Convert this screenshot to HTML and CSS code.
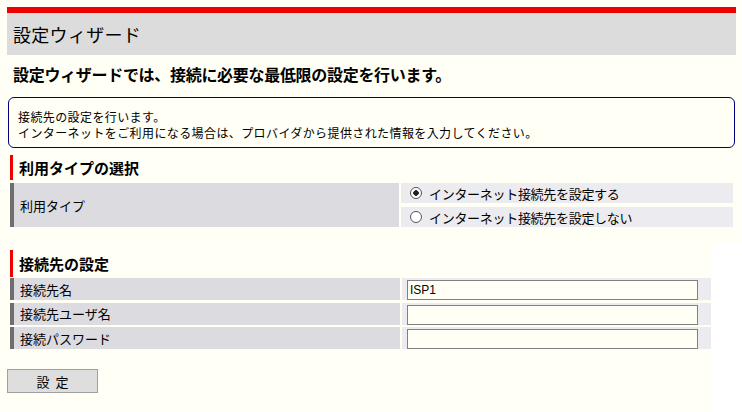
FILE: index.html
```html
<!DOCTYPE html>
<html lang="ja">
<head>
    <meta charset="UTF-8">
    <meta name="viewport" content="width=device-width, initial-scale=1.0">
    <title>設定ウィザード</title>
    <link rel="stylesheet" href="styles.css">
</head>
<body>
    <!-- 上部: タイトルと利用タイプ -->
    <div class="top">
        <div class="titlebar">
            <h1>設定ウィザード</h1>
        </div>
        <p class="lead">設定ウィザードでは、接続に必要な最低限の設定を行います。</p>

        <div class="note">
            <p>接続先の設定を行います。</p>
            <p>インターネットをご利用になる場合は、プロバイダから提供された情報を入力してください。</p>
        </div>

        <h2 class="sec">利用タイプの選択</h2>
        <div class="type-grid">
            <div class="label label-tall">利用タイプ</div>
            <label class="value"><input type="radio" name="type" checked> インターネット接続先を設定する</label>
            <label class="value"><input type="radio" name="type"> インターネット接続先を設定しない</label>
        </div>
    </div>

    <!-- 下部: 接続先の設定 -->
    <div class="bottom">
        <h2 class="sec sec-2">接続先の設定</h2>
        <div class="conn-grid">
            <div class="label">接続先名</div>
            <div class="value"><input type="text" class="field" value="ISP1"></div>
            <div class="label">接続先ユーザ名</div>
            <div class="value"><input type="text" class="field"></div>
            <div class="label">接続パスワード</div>
            <div class="value"><input type="password" class="field"></div>
        </div>
        <button class="submit-btn">設&nbsp;&nbsp;定</button>
    </div>
</body>
</html>
```

FILE: styles.css
```css
/* 全体 */
body {
    margin: 0;
    background-color: #ffffff;
    font-family: "Noto Sans CJK JP", "Liberation Sans", sans-serif;
    color: #000;
}

.top {
    background-color: #fffff5;
    padding: 7px 6px 16px 7px;
}

.bottom {
    background-color: #fffff5;
    width: 704px;
    height: 169px;
    padding-left: 7px;
    padding-top: 7px;
}

/* タイトル */
.titlebar {
    border-top: 6px solid #ee0000;
    background-color: #dcdcdc;
    height: 42px;
    display: flex;
    align-items: center;
    padding-left: 6px;
}
.titlebar h1 {
    margin: 0;
    font-size: 18px;
    font-weight: normal;
    line-height: 1;
    letter-spacing: 0.3px;
}

.lead {
    margin: 8px 0 0 6px;
    font-size: 16px;
    font-weight: bold;
    line-height: 22px;
    letter-spacing: -0.3px;
}

/* 説明ボックス */
.note {
    margin: 12px 1px 0 1px;
    border: 1px solid #000080;
    border-radius: 6px;
    padding: 11px 8px 6px 9px;
    font-size: 12px;
    line-height: 16px;
    letter-spacing: 0.4px;
}
.note p {
    margin: 0;
}

/* 見出し */
.sec {
    margin: 7px 0 0 3px;
    border-left: 3px solid #ee0000;
    padding-left: 6px;
    height: 25px;
    line-height: 25px;
    font-size: 15px;
    font-weight: bold;
}
.sec-2 {
    margin-top: 0;
    height: 27px;
    line-height: 27px;
}

/* 表 */
.label {
    background-color: #dcdce0;
    border-left: 4px solid #6e6e6e;
    padding-left: 6px;
    font-size: 13px;
    display: flex;
    align-items: center;
}
.value {
    background-color: #ececf0;
    display: flex;
    align-items: center;
    font-size: 13px;
    letter-spacing: -0.3px;
}

.type-grid {
    display: grid;
    grid-template-columns: 389px 1fr;
    grid-template-rows: 20px 20px;
    gap: 4px 2px;
    margin: 3px 3px 0 3px;
}
.label-tall {
    grid-row: span 2;
}
.type-grid .value {
    padding-left: 8px;
}
.type-grid input {
    appearance: none;
    width: 12px;
    height: 12px;
    margin: 0 7px 0 1px;
    border: 1px solid #555;
    border-radius: 50%;
    background-color: #fff;
}
.type-grid input:checked {
    background: radial-gradient(circle, #222 0, #222 2.5px, #fff 3px);
}

.conn-grid {
    display: grid;
    grid-template-columns: 390px 1fr;
    grid-auto-rows: 22px;
    gap: 2.5px 2px;
    margin: 1px 0 0 3px;
}
.conn-grid .value {
    align-items: flex-start;
    padding: 2px 0 0 5px;
}
.field {
    box-sizing: border-box;
    width: 291px;
    height: 20px;
    margin: 0;
    border: 1px solid #808080;
    background-color: #fffff5;
    font-family: "Liberation Sans", sans-serif;
    font-size: 12px;
    padding: 0 2px;
}

/* ボタン */
.submit-btn {
    display: block;
    margin-top: 20px;
    width: 91px;
    height: 24px;
    background-color: #dedede;
    border: 1px solid #a0a0a0;
    font-family: "Noto Sans CJK JP", sans-serif;
    font-size: 13px;
    padding: 0;
}
```
